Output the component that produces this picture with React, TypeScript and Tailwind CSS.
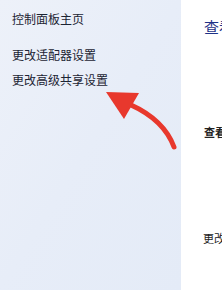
export default function App() {
  const font = { fontFamily: '"Noto Sans CJK SC", "Liberation Sans", sans-serif' }

  return (
    <div className="relative flex w-[222px] h-[290px] overflow-hidden bg-white" style={font}>
      {/* Sidebar */}
      <div className="w-[181px] shrink-0 h-full bg-gradient-to-br from-[#edf1f9] via-[#e7edf8] to-[#e4ebf7] pl-3 pt-[10px]">
        <div className="text-[12px] leading-[18px] text-[#1c2433]">控制面板主页</div>
        <div className="mt-[18px] flex flex-col gap-[7px] text-[12px] leading-[18px] text-[#1c2433]">
          <div>更改适配器设置</div>
          <div>更改高级共享设置</div>
        </div>
      </div>

      {/* Main */}
      <div className="min-w-0 flex-1 h-full pl-[23px] pt-[17px]">
        <div className="text-[15px] leading-[20px] text-[#1e3287] whitespace-nowrap">查看</div>
        <div className="mt-[87px] text-[11px] leading-[16px] font-bold text-[#222] whitespace-nowrap">查看</div>
        <div className="mt-[90px] -ml-[1px] text-[11px] leading-[16px] text-[#222] whitespace-nowrap">更改</div>
      </div>

      {/* Red arrow overlay */}
      <svg className="absolute left-0 top-0" width="222" height="290" viewBox="0 0 222 290">
        <path d="M131 105 Q164 120 174 147" fill="none" stroke="#e8382d" strokeWidth="5" strokeLinecap="round" />
        <polygon points="106,92 139,93 124,119" fill="#e8382d" />
      </svg>
    </div>
  )
}
